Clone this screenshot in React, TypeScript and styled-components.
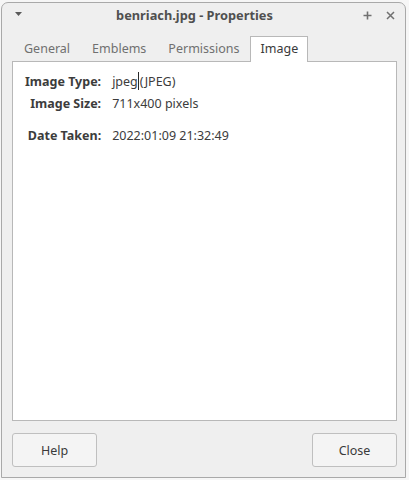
import React from "react";
import styled, { createGlobalStyle } from "styled-components";

const Global = createGlobalStyle`
  html, body { margin: 0; padding: 0; background: #f6f6f6; }
  body { font-family: "Noto Sans", "Open Sans", sans-serif; }
`;

const Window = styled.div`
  box-sizing: border-box;
  margin: 2px 0 0 1px;
  width: 405px;
  height: 476px;
  border: 1px solid #a9a9a9;
  border-radius: 7px 7px 0 0;
  background: #efefef;
  display: flex;
  flex-direction: column;
`;

const TitleBar = styled.div`
  height: 32px;
  display: flex;
  align-items: center;
  flex-shrink: 0;
`;

const TitleSide = styled.div<{ $w: number }>`
  width: ${(p) => p.$w}px;
  height: 100%;
  display: flex;
  align-items: center;
  justify-content: center;
  gap: 14px;
`;

const Title = styled.div`
  flex: 1;
  text-align: center;
  font-weight: 700;
  font-size: 12.8px;
  color: #505050;
  margin-top: -8px;
`;

const IconBox = styled.svg<{ $up?: number }>`
  display: block;
  margin-top: -${(p) => p.$up ?? 8}px;
`;

const Body = styled.div`
  flex: 1;
  display: flex;
  flex-direction: column;
  padding: 1px 8px 10px 10px;
  min-height: 0;
`;

const Tabs = styled.div`
  display: flex;
  height: 26px;
  margin-bottom: -1px;
  position: relative;
  z-index: 1;
`;

const Tab = styled.div<{ $active?: boolean }>`
  box-sizing: border-box;
  height: 26px;
  padding: 0 9px 0 ${(p) => (p.$active ? 10 : 11)}px;
  display: flex;
  align-items: center;
  font-size: 12.5px;
  color: ${(p) => (p.$active ? "#3a3a3a" : "#707070")};
  background: ${(p) => (p.$active ? "#ffffff" : "transparent")};
  border: 1px solid ${(p) => (p.$active ? "#b8b8b8" : "transparent")};
  border-bottom: none;
  padding-bottom: 2px;
`;

const Panel = styled.div`
  box-sizing: border-box;
  height: 361px;
  background: #ffffff;
  border: 1px solid #b8b8b8;
  padding: 9px 12px;
`;

const InfoGrid = styled.div`
  display: grid;
  grid-template-columns: max-content 1fr;
  column-gap: 11px;
  row-gap: 0;
  font-size: 12.5px;
  line-height: 22px;
  color: #3c3c3c;
`;

const Label = styled.div`
  font-weight: 700;
  text-align: right;
`;

const Value = styled.div`
  white-space: nowrap;
`;

const Spacer = styled.div`
  grid-column: 1 / span 2;
  height: 10px;
`;

const Caret = styled.span`
  display: inline-block;
  width: 1px;
  height: 18px;
  background: #2a2a2a;
  vertical-align: -4px;
  margin: 0 1px 0 0;
`;

const Footer = styled.div`
  display: flex;
  justify-content: space-between;
  margin-top: 12px;
`;

const Button = styled.button`
  box-sizing: border-box;
  width: 85px;
  height: 34px;
  border: 1px solid #bfbfbf;
  border-radius: 3px;
  background: #f4f4f4;
  font-family: "Noto Sans", "Open Sans", sans-serif;
  font-size: 12.5px;
  color: #3a3a3a;
  padding: 0;
`;

export default function App() {
  return (
    <>
      <Global />
      <Window>
        <TitleBar>
          <TitleSide $w={34}>
            <IconBox $up={10} width="8" height="5" viewBox="0 0 8 5">
              <path d="M0 0 H7 L3.5 4 Z" fill="#5a5a5a" />
            </IconBox>
          </TitleSide>
          <Title>benriach.jpg - Properties</Title>
          <TitleSide $w={52}>
            <IconBox width="9" height="9" viewBox="0 0 9 9">
              <path d="M4.5 0.5 V8.5 M0.5 4.5 H8.5" stroke="#707070" strokeWidth="1.6" />
            </IconBox>
            <IconBox width="9" height="9" viewBox="0 0 9 9">
              <path d="M1 1 L8 8 M8 1 L1 8" stroke="#707070" strokeWidth="1.5" />
            </IconBox>
          </TitleSide>
        </TitleBar>
        <Body>
          <Tabs>
            <Tab>General</Tab>
            <Tab>Emblems</Tab>
            <Tab>Permissions</Tab>
            <Tab $active>Image</Tab>
          </Tabs>
          <Panel>
            <InfoGrid>
              <Label>Image Type:</Label>
              <Value>
                jpeg<Caret />(JPEG)
              </Value>
              <Label>Image Size:</Label>
              <Value>711x400 pixels</Value>
              <Spacer />
              <Label>Date Taken:</Label>
              <Value>2022:01:09 21:32:49</Value>
            </InfoGrid>
          </Panel>
          <Footer>
            <Button>Help</Button>
            <Button>Close</Button>
          </Footer>
        </Body>
      </Window>
    </>
  );
}
